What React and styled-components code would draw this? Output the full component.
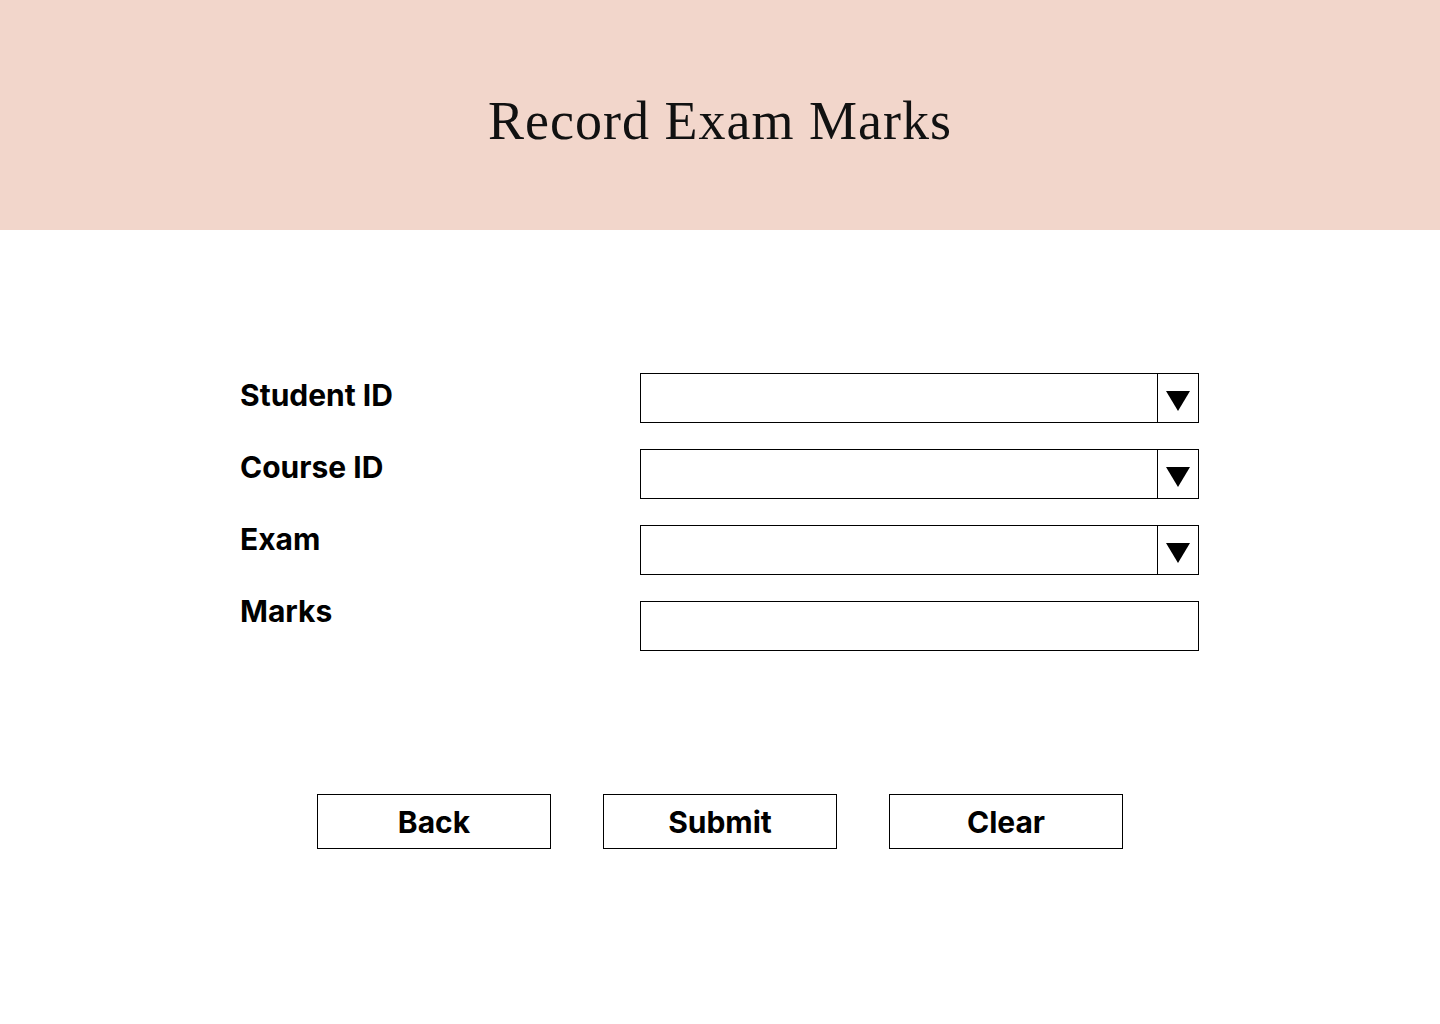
import React from "react";
import styled, { createGlobalStyle } from "styled-components";

const Global = createGlobalStyle`
  html, body { margin: 0; padding: 0; background: #ffffff; }
  body { font-family: Inter, "Liberation Sans", sans-serif; color: #000; }
`;

const Page = styled.div`
  width: 1440px;
  min-height: 1024px;
  display: flex;
  flex-direction: column;
`;

const Header = styled.header`
  height: 230px;
  background: #f2d6cb;
  display: flex;
  align-items: center;
  justify-content: center;
`;

const Title = styled.h1`
  margin: 0;
  padding-top: 12px;
  font-family: "Liberation Serif", "Times New Roman", serif;
  font-weight: 400;
  font-size: 54px;
  letter-spacing: 1px;
  color: #111;
`;

const Form = styled.div`
  display: grid;
  grid-template-columns: 400px 559px;
  margin: 143px 0 0 240px;
`;

const Labels = styled.div`
  display: flex;
  flex-direction: column;
  gap: 36px;
  padding-top: 4px;
`;

const Label = styled.div`
  font-size: 30px;
  font-weight: 700;
  line-height: 36px;
  height: 36px;
`;

const Fields = styled.div`
  display: flex;
  flex-direction: column;
  gap: 26px;
`;

const Field = styled.div`
  height: 50px;
  box-sizing: border-box;
  border: 1px solid #000;
  display: flex;
  background: #fff;
`;

const FieldInput = styled.div`
  flex: 1;
`;

const Arrow = styled.div`
  width: 41px;
  border-left: 1px solid #000;
  display: flex;
  align-items: center;
  justify-content: center;
  padding-top: 6px;
  box-sizing: border-box;
`;

const Buttons = styled.div`
  display: flex;
  justify-content: center;
  gap: 52px;
  margin-top: 143px;
`;

const Button = styled.button`
  width: 234px;
  height: 55px;
  box-sizing: border-box;
  border: 1px solid #000;
  background: #fff;
  font-family: Inter, "Liberation Sans", sans-serif;
  font-size: 30px;
  font-weight: 700;
  color: #000;
  padding: 0;
  cursor: pointer;
`;

const Triangle = () => (
  <svg width="24" height="20" viewBox="0 0 24 20">
    <polygon points="0,0 24,0 12,20" fill="#000" />
  </svg>
);

const rows = [
  { label: "Student ID", select: true },
  { label: "Course ID", select: true },
  { label: "Exam", select: true },
  { label: "Marks", select: false },
];

export default function App() {
  return (
    <Page>
      <Global />
      <Header>
        <Title>Record Exam Marks</Title>
      </Header>
      <Form>
        <Labels>
          {rows.map((r) => (
            <Label key={r.label}>{r.label}</Label>
          ))}
        </Labels>
        <Fields>
          {rows.map((r) => (
            <Field key={r.label}>
              <FieldInput />
              {r.select && (
                <Arrow>
                  <Triangle />
                </Arrow>
              )}
            </Field>
          ))}
        </Fields>
      </Form>
      <Buttons>
        <Button>Back</Button>
        <Button>Submit</Button>
        <Button>Clear</Button>
      </Buttons>
    </Page>
  );
}
